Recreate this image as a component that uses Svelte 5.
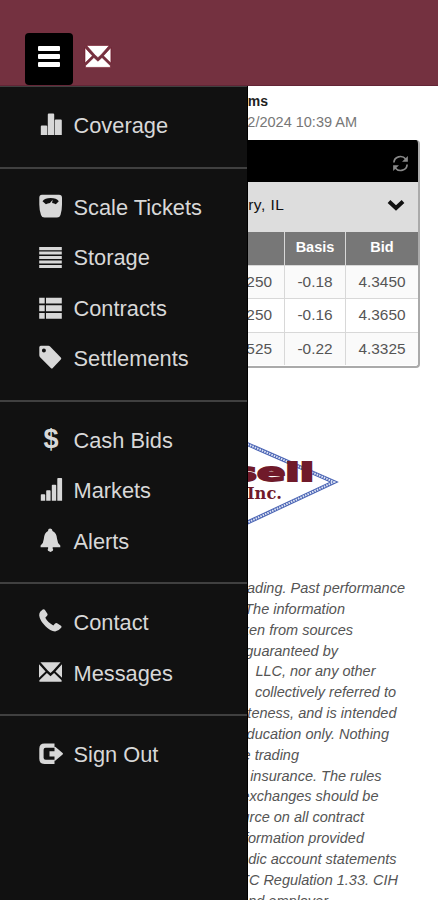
<script lang="ts">
	// every icon is drawn in a 24x24 box
	const groups = [
		[{ label: 'Coverage', icon: 'stats' }],
		[
			{ label: 'Scale Tickets', icon: 'scale' },
			{ label: 'Storage', icon: 'lines' },
			{ label: 'Contracts', icon: 'list' },
			{ label: 'Settlements', icon: 'tag' }
		],
		[
			{ label: 'Cash Bids', icon: 'dollar' },
			{ label: 'Markets', icon: 'signal' },
			{ label: 'Alerts', icon: 'bell' }
		],
		[
			{ label: 'Contact', icon: 'phone' },
			{ label: 'Messages', icon: 'mail' }
		],
		[{ label: 'Sign Out', icon: 'logout' }]
	]

	const icons: Record<string, string> = {
		stats: 'M1.800 14.500q0-1 1-1h4.400q1 0 1 1V23H1.800zM8.800 2.500q0-1 1-1h4.400q1 0 1 1V23H8.800zM15.800 8.500q0-1 1-1h5q1 0 1 1V23h-7z',
		scale: 'M3 .7h17q3 0 3 3v6.800q0 5.500-1.500 10.500-.8 2.500-3.500 2.500H5.500q-2.700 0-3.500-2.500Q.3 16 .3 10.500V3.700q0-3 2.700-3zM3.500 7.200l3.400 3.100q1.600-1 4.100-1.300l2.600-3.200-.5 3.200q2.200.3 3.700 1.300l3-3.100Q17.500 4.100 11.700 4.100T3.500 7.200z',
		lines: 'M.2 3h22.600v3.200H.2zM.2 7.500h22.600v3.100H.2zM.2 12h22.600v3.100H.2zM.2 16.400h22.600v3.100H.2zM.2 20.900h22.600V24H.2z',
		list: 'M.2 2.700h5.500v5.900H.2zM7 2.700h15.800v5.900H7zM.2 10.200h5.500v6H.2zM7 10.200h15.800v6H7zM.2 17.900h5.500v5.900H.2zM7 17.900h15.800v5.900H7z',
		tag: 'M.3 2.300q0-1.500 1.500-1.500h7.600q1 0 1.700.7l10.700 11q1 1 0 2l-8 8.600q-1 1-2 0L1.100 12.200q-.8-.8-.8-2zM2.900 5.500a2 2 0 1 0 4 0 2 2 0 1 0-4 0z',
		signal: 'M1.800 18q0-.8.800-.8h2.800q.8 0 .8.800v5.700H1.800zM7.200 14q0-.8.800-.8h2.800q.8 0 .8.800v9.700H7.200zM12.800 8.500q0-.8.800-.8h2.800q.8 0 .8.800v15.200h-4.400zM18.300 1.800q0-.8.800-.8h3.200q.8 0 .8.800v21.900h-4.800z',
		bell: 'M11.200.5q2.300 0 2.300 2.500 4.300 2.200 4.600 8 .2 4 3.200 6.400v1.800H13.700v1.500q1 .3.100 2l-2.300 1.300-2.500-1.200q-.8-1.700.1-2.100v-1.500H1.600v-1.800q3-2.400 3.200-6.400.3-5.800 4.200-8Q9 .5 11.200.5z',
		phone: 'M1.200 2.800L3.700.5q1.200-.8 2.100.3l2.600 4q.6 1.100-.3 2L6.300 8.800q2.500 4.900 8 7.600l1.800-1.900q.9-.9 2-.3l3.900 2.500q1.100.9.2 2.100-2.600 3.400-6.100 3.600-4.900-.4-9.600-5.200Q.9 12 .2 6.600.1 4.400 1.200 2.800z',
		mail: 'M1.400 2.200h20.200L14.200 10.600l-2.700 2.400-2.700-2.400zM0 4.200l6.600 7.200L0 17.800zM23 4.200v13.600l-6.600-6.400zM7.900 12.900l3.600 3.300 3.600-3.300 7.500 7.300v1.500H.4v-1.500z',
		logout: 'M5.500 2.500h10v4.200H6.600q-2 0-2 2v8.100q0 2 2 2h8.900V23h-10q-5.200 0-5.200-5.200V7.700q0-5.200 5.200-5.200zM15.500 6.500q0-1 1-.5l7.100 6.100q.9.700 0 1.400l-7.100 6.100q-1 .5-1-.7v-3.300h-5v-5.300h5z'
	}

	const bids = [
		{ futures: '4.5250', basis: '-0.18', bid: '4.3450' },
		{ futures: '4.5250', basis: '-0.16', bid: '4.3650' },
		{ futures: '4.5525', basis: '-0.22', bid: '4.3325' }
	]

	// end = width of the part of the line that the menu leaves free
	const disclaimer = [
		{ text: 'trading. Past performance', end: 157 },
		{ text: 'The information', end: 97 },
		{ text: 'taken from sources', end: 105 },
		{ text: 'guaranteed by', end: 90 },
		{ text: 'LLC, nor any other', end: 127.5 },
		{ text: 'collectively referred to', end: 148 },
		{ text: 'completeness, and is intended', end: 148.5 },
		{ text: 'education only. Nothing', end: 141 },
		{ text: 'the trading', end: 51 },
		{ text: 'insurance. The rules', end: 133.5 },
		{ text: 'exchanges should be', end: 130.5 },
		{ text: 'source on all contract', end: 116 },
		{ text: 'information provided', end: 116 },
		{ text: 'periodic account statements', end: 148.5 },
		{ text: 'CFTC Regulation 1.33. CIH', end: 150 },
		{ text: 'and employer', end: 80 }
	]

	let selected = $state('')
</script>

{#snippet glyph(name: string)}
	<svg class="glyph" viewBox="0 0 24 24" aria-hidden="true">
		<path d={icons[name]} fill-rule="evenodd" />
	</svg>
{/snippet}

<div class="app">
	<header class="topbar">
		<button class="menu-btn" aria-label="Menu">
			<span></span>
			<span></span>
			<span></span>
		</button>
		<button class="mail-btn" aria-label="Messages">{@render glyph('mail')}</button>
	</header>

	<div class="body">
		<nav class="drawer">
			{#each groups as group}
				<ul class="group">
					{#each group as item}
						<li>
							<button
								class="item"
								class:active={selected === item.label}
								onclick={() => (selected = item.label)}
							>
								{#if item.icon === 'dollar'}
									<span class="dollar">$</span>
								{:else}
									{@render glyph(item.icon)}
								{/if}
								<span>{item.label}</span>
							</button>
						</li>
					{/each}
				</ul>
			{/each}
		</nav>

		<main class="content">
			<div class="clip company">Farms</div>
			<div class="clip date">7/12/2024 10:39 AM</div>

			<section class="card">
				<div class="card-head">
					<svg class="refresh" viewBox="0 0 18 18" aria-hidden="true">
						<path d="M2 8C2.300 1.500 10.500-.5 14.600 4.300M16 10C15.700 16.500 7.500 18.500 3.400 13.700" />
						<path class="tip" d="M16.800 1v6.200h-6.200zM1.200 17v-6.200h6.200z" />
					</svg>
				</div>
				<div class="location">
					<span class="clip place">Avery, IL</span>
					<svg class="chevron" viewBox="0 0 18 12" aria-hidden="true">
						<path d="M2 2.500l7 6.500 7-6.500" />
					</svg>
				</div>
				<div class="table">
					<div class="row head">
						<span></span>
						<span>Basis</span>
						<span>Bid</span>
					</div>
					{#each bids as row}
						<div class="row">
							<span class="first">{row.futures}</span>
							<span>{row.basis}</span>
							<span>{row.bid}</span>
						</div>
					{/each}
				</div>
			</section>

			<svg class="logo" viewBox="0 0 100 100">
				<path class="diamond" d="M-10 9L86 51L-10 96" />
				<path class="diamond-gap" d="M-10 9L86 51L-10 96" />
				<text class="name" x="-16" y="49.500" textLength="82" lengthAdjust="spacingAndGlyphs">sell</text>
				<text class="inc" x="-1" y="67.500" textLength="35" lengthAdjust="spacingAndGlyphs">Inc.</text>
			</svg>

			<div class="disclaimer">
				{#each disclaimer as line}
					<div class="clip" style:width="{line.end}px">{line.text}</div>
				{/each}
			</div>
		</main>
	</div>
</div>

<style>
	:global(body) {
		background: #fff;
		overflow: hidden;
	}

	.app {
		height: 900px;
		display: flex;
		flex-direction: column;
		overflow: hidden;
		font-family: 'Liberation Sans', Arial, sans-serif;
	}

	button {
		border: none;
		background: none;
		padding: 0;
		font: inherit;
		color: inherit;
		cursor: pointer;
	}

	.topbar {
		box-sizing: border-box;
		flex: none;
		height: 86px;
		padding: 33px 0 0 25px;
		display: flex;
		gap: 11.5px;
		background: #743140;
		border-bottom: 1px solid #632536;
	}

	.menu-btn {
		width: 48px;
		height: 52px;
		display: flex;
		flex-direction: column;
		align-items: center;
		justify-content: center;
		gap: 3px;
		padding-bottom: 5px;
		border-radius: 4px;
		background: #000;
	}

	.menu-btn span {
		width: 22px;
		height: 5px;
		border-radius: 1px;
		background: #fff;
	}

	.mail-btn {
		height: 47px;
		display: flex;
		align-items: center;
	}

	.mail-btn .glyph {
		width: 27px;
		height: 27px;
		margin: 0;
		fill: #fff;
		stroke: #6c0a1c;
		stroke-width: 0.5;
	}

	.body {
		flex: 1;
		min-height: 0;
		display: flex;
	}

	.drawer {
		box-sizing: border-box;
		flex: none;
		width: 248px;
		background: #111;
		border-right: 1px solid #000;
		color: #d8d8d8;
	}

	.group {
		box-sizing: border-box;
		list-style: none;
		margin: 0;
		padding: 13.4px 0 15.3px 39px;
		border-top: 2px solid #404040;
	}

	.group:first-child {
		padding-top: 14px;
		border-top-width: 1px;
	}

	.item {
		width: 100%;
		height: 50.6px;
		display: flex;
		align-items: center;
		gap: 10.5px;
		font-size: 21.8px;
		line-height: 24px;
		text-align: left;
	}

	.item.active {
		color: #fff;
	}

	.glyph {
		flex: none;
		width: 24px;
		height: 24px;
		margin-top: -4px;
		overflow: visible;
		fill: currentColor;
	}

	.dollar {
		width: 24px;
		margin-top: -4px;
		font-size: 27px;
		font-weight: bold;
		text-align: center;
	}

	.content {
		flex: 1;
		min-width: 0;
		overflow: hidden;
		color: #555;
		font-size: 14.5px;
	}

	.clip {
		display: flex;
		justify-content: flex-end;
		white-space: nowrap;
	}

	.company {
		width: 20px;
		margin-top: 5px;
		height: 20px;
		line-height: 20px;
		font-size: 14px;
		font-weight: bold;
		color: #222;
	}

	.date {
		width: 109px;
		height: 29px;
		line-height: 22px;
		color: #777;
	}

	.card {
		box-sizing: border-box;
		width: 172px;
		height: 227.5px;
		overflow: hidden;
		border: 2px solid #aaa;
		border-top: none;
		border-left: none;
		border-radius: 0 4px 4px 0;
	}

	.card-head {
		height: 42px;
		display: flex;
		align-items: center;
		justify-content: flex-end;
		padding-right: 9px;
		background: #000;
	}

	.refresh {
		width: 17px;
		height: 17px;
		margin-top: 4px;
		fill: none;
		stroke: #888;
		stroke-width: 1.8;
	}

	.refresh .tip {
		fill: #888;
		stroke: none;
	}

	.location {
		box-sizing: border-box;
		height: 50px;
		padding: 0 13px 4px 0;
		display: flex;
		align-items: center;
		justify-content: space-between;
		background: #ddd;
		color: #111;
	}

	.place {
		width: 36.5px;
		overflow: hidden;
		font-size: 15.5px;
		letter-spacing: 0.5px;
	}

	.chevron {
		width: 18px;
		height: 12px;
		margin-top: 0;
		fill: none;
		stroke: #111;
		stroke-width: 4;
	}

	.table {
		display: flex;
		flex-direction: column;
		gap: 1px;
		background: #d8d8d8;
	}

	.row {
		display: grid;
		grid-template-columns: 36px 60px 1fr;
		gap: 1px;
		height: 32.5px;
		font-size: 15.4px;
	}

	.row span {
		display: flex;
		align-items: center;
		justify-content: center;
		background: #fafafa;
	}

	.row:nth-child(3) span {
		background: #fff;
	}

	.row .first {
		box-sizing: border-box;
		justify-content: flex-end;
		padding-right: 12px;
	}

	.row.head {
		height: 32.5px;
	}

	.row.head span {
		padding-bottom: 2px;
		background: #777;
		color: #fff;
		font-size: 14.5px;
		font-weight: bold;
	}

	.logo {
		display: block;
		width: 100px;
		height: 100px;
		margin-top: 63px;
	}

	.diamond {
		fill: none;
		stroke: #4a64b4;
		stroke-width: 4;
	}

	.diamond-gap {
		fill: none;
		stroke: #dde3f4;
		stroke-width: 2;
		stroke-dasharray: 1.6 1;
	}

	.name {
		font-family: 'DejaVu Sans', sans-serif;
		font-size: 24px;
		font-weight: bold;
		fill: #701a2a;
		stroke: #701a2a;
		stroke-width: 1.8;
	}

	.inc {
		font-family: 'DejaVu Serif', serif;
		font-size: 16px;
		font-weight: bold;
		fill: #701a2a;
	}

	.disclaimer {
		margin-top: 47.5px;
		font-style: italic;
		line-height: 20.85px;
	}
</style>
